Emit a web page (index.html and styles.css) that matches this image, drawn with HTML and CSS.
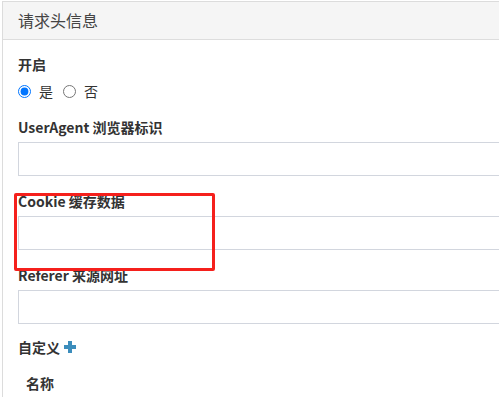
FILE: index.html
```html
<!DOCTYPE html>
<html>
<head>
    <title>请求头信息</title>
    <link rel="stylesheet" href="styles.css">
</head>
<body>
    <div class="panel">
        <div class="panel-heading">请求头信息</div>
        <div class="panel-body">
            <div class="form-group radios">
                <label class="label">开启</label>
                <div class="radio-row">
                    <label class="radio"><input type="radio" name="open" checked> 是</label>
                    <label class="radio"><input type="radio" name="open"> 否</label>
                </div>
            </div>
            <div class="form-group">
                <label class="label">UserAgent 浏览器标识</label>
                <input class="form-control" type="text">
            </div>
            <div class="form-group">
                <label class="label">Cookie 缓存数据</label>
                <input class="form-control" type="text">
            </div>
            <div class="form-group">
                <label class="label">Referer 来源网址</label>
                <input class="form-control" type="text">
            </div>
            <div class="custom">
                <span class="label">自定义</span>
                <svg class="plus" width="12" height="12" viewBox="0 0 12 12">
                    <rect x="4" y="0" width="4" height="12" fill="#3c8dbc"/>
                    <rect x="0" y="4" width="12" height="4" fill="#3c8dbc"/>
                </svg>
            </div>
            <table class="table">
                <tr><th>名称</th></tr>
            </table>
        </div>
    </div>
    <div class="mark"></div>
</body>
</html>
```

FILE: styles.css
```css
body {
    margin: 0;
    font-family: "Noto Sans CJK SC", "Noto Sans", sans-serif;
    font-size: 14px;
    line-height: 20px;
    color: #333;
    background: #fff;
    overflow: hidden;
}
.panel {
    margin: 1px 0 0 2px;
    border: 1px solid #dcdcdc;
    border-right: none;
    background: #fff;
}
.panel-heading {
    height: 37px;
    padding: 0 15px;
    line-height: 36px;
    font-size: 16px;
    color: #444;
    background: #f5f5f5;
    border-bottom: 1px solid #ddd;
}
.panel-body {
    padding: 14px 0 0 15px;
}
.form-group {
    margin-bottom: 15px;
}
.label {
    display: block;
    font-weight: 700;
    margin-bottom: 5px;
}
.radios .label {
    margin-bottom: 6px;
}
.radio-row {
    display: flex;
    gap: 10px;
    height: 22px;
    align-items: center;
}
.radio {
    display: flex;
    align-items: center;
    gap: 8px;
}
.radio input {
    margin: 0;
    width: 13px;
    height: 13px;
}
.form-control {
    display: block;
    box-sizing: border-box;
    width: 100%;
    height: 34px;
    margin: 0;
    border: 1px solid #d2d6de;
    border-right: none;
    background: #fff;
    padding: 6px 12px;
}
.custom {
    display: flex;
    align-items: center;
    gap: 4px;
    height: 20px;
    margin-top: -2px;
}
.custom .label {
    margin: 0;
}
.table {
    margin-top: 8px;
    border-collapse: collapse;
}
.table th {
    padding: 8px;
    text-align: left;
    font-weight: 700;
}
.mark {
    position: absolute;
    left: 14px;
    top: 193px;
    width: 195px;
    height: 72px;
    border: 3px solid #f5201c;
    border-radius: 2px;
}
```
